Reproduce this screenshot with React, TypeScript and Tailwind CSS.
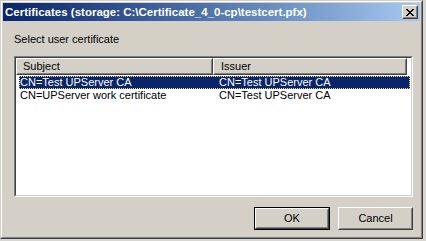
const font = { fontFamily: '"Liberation Sans", Arial, sans-serif' };

function Raised({ children, className = "" }: { children?: React.ReactNode; className?: string }) {
  return (
    <div className={`border border-t-white border-l-white border-r-[#404040] border-b-[#404040] ${className}`}>
      <div className="w-full h-full border border-transparent border-r-[#808080] border-b-[#808080] bg-[#d4d0c8] flex items-center justify-center">
        {children}
      </div>
    </div>
  );
}

export default function App() {
  return (
    <div className="w-[426px] h-[241px] bg-[#d8d6d0] overflow-hidden text-[11px] text-black" style={font}>
      {/* window */}
      <div className="w-[423px] h-[239px] border border-t-[#d4d0c8] border-l-[#d4d0c8] border-r-[#404040] border-b-[#404040]">
        <div className="w-full h-full border border-t-white border-l-white border-r-[#808080] border-b-[#808080] bg-[#d4d0c8] p-px flex flex-col">
          {/* title bar */}
          <div className="h-[18px] shrink-0 flex items-center bg-gradient-to-r from-[#0a246a] to-[#a6caf0] pl-[2px] pr-[2px]">
            <span className="font-bold text-white text-[11.5px] leading-[13px] whitespace-nowrap">
              Certificates (storage: C:\Certificate_4_0-cp\testcert.pfx)
            </span>
            <div className="ml-auto">
              <Raised className="w-[16px] h-[14px]">
                <svg width="8" height="7" viewBox="0 0 8 7" className="block">
                  <path d="M0 0h2v1h-2zM6 0h2v1h-2zM1 1h2v1h-2zM5 1h2v1h-2zM2 2h4v1h-4zM3 3h2v1h-2zM2 4h4v1h-4zM1 5h2v1h-2zM5 5h2v1h-2zM0 6h2v1h-2zM6 6h2v1h-2z" fill="#000" />
                </svg>
              </Raised>
            </div>
          </div>
          {/* content */}
          <div className="flex-1 flex flex-col pl-[11px] pr-[6px] pt-[12px]">
            <div className="leading-[13px] h-[13px]">Select user certificate</div>
            {/* list box */}
            <div className="mt-[10px] w-[399px] h-[141px] border border-t-[#808080] border-l-[#808080] border-r-white border-b-white">
              <div className="w-full h-full border border-t-[#404040] border-l-[#404040] border-r-[#d4d0c8] border-b-[#d4d0c8] bg-white flex flex-col">
                {/* header */}
                <div className="flex h-[17px] shrink-0">
                  <Header w="w-[197px]" pl="pl-[5px]">Subject</Header>
                  <Header w="w-[194px]" pl="pl-[6px]">Issuer</Header>
                </div>
                {/* rows */}
                <div className="ml-[3px] mr-[1px] mt-px flex flex-col">
                  <div className="h-[13px] flex bg-[#0a246a] text-white border border-dotted border-[#f0dc90] leading-[11px]">
                    <div className="w-[193px]">CN=Test UPServer CA</div>
                    <div className="flex-1 pl-[6px]">CN=Test UPServer CA</div>
                  </div>
                  <div className="h-[13px] flex leading-[11px] border border-transparent">
                    <div className="w-[193px]">CN=UPServer work certificate</div>
                    <div className="flex-1 pl-[6px]">CN=Test UPServer CA</div>
                  </div>
                </div>
              </div>
            </div>
            {/* buttons */}
            <div className="mt-[10px] w-[399px] flex justify-end gap-[8px] -mr-px">
              <div className="w-[76px] h-[23px] border border-black">
                <Raised className="w-full h-full">OK</Raised>
              </div>
              <Raised className="w-[75px] h-[23px]">Cancel</Raised>
            </div>
          </div>
        </div>
      </div>
    </div>
  );
}

function Header({ children, w, pl }: { children: React.ReactNode; w: string; pl: string }) {
  return (
    <div className={`${w} h-full border border-t-white border-l-white border-r-[#404040] border-b-[#404040]`}>
      <div className={`w-full h-full border border-transparent border-r-[#808080] border-b-[#808080] bg-[#d4d0c8] flex items-center ${pl}`}>
        {children}
      </div>
    </div>
  );
}
